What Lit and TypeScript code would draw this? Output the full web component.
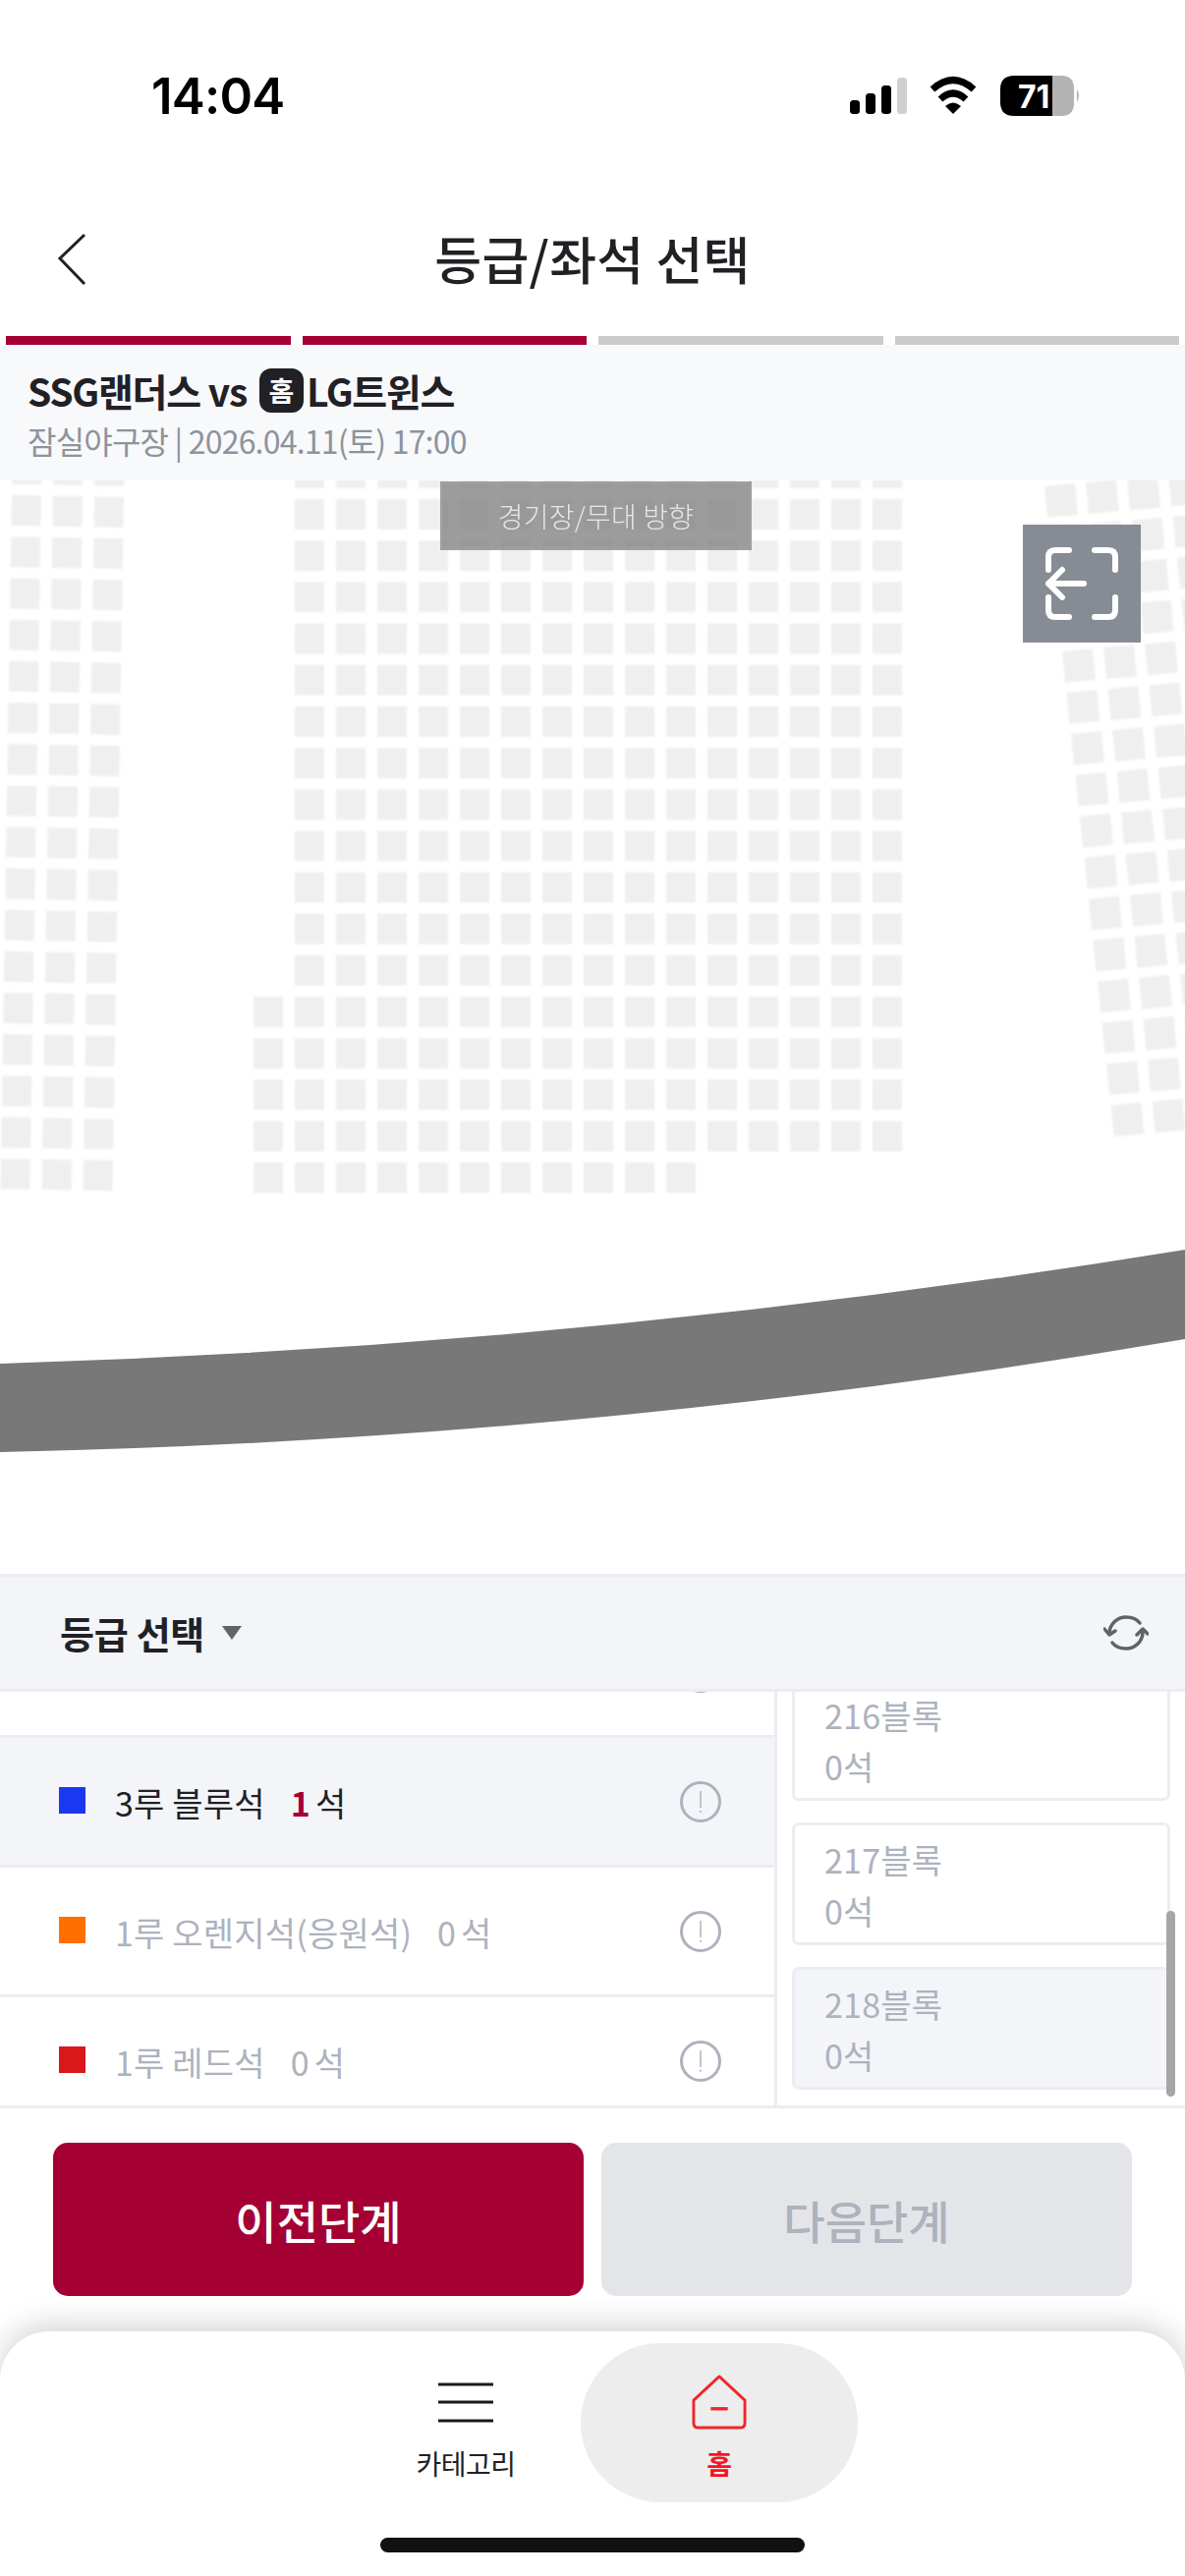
import { LitElement, html, css, svg } from "lit";
import { customElement } from "lit/decorators.js";

const seats = () => {
  const out: unknown[] = [];
  const rect = (x: number, y: number, w: number, h: number, a: number) =>
    svg`<rect x=${x} y=${y} width=${w} height=${h} transform=${`rotate(${a} ${x} ${y})`}></rect>`;
  // left block
  for (let k = -1; k <= 16; k++)
    for (let c = 0; c < 3; c++)
      out.push(rect(12 - 0.69 * k + 42 * c, 504 + 42.2 * k + 0.7 * c, 30, 31, 0.94));
  // centre block
  for (let k = -1; k <= 16; k++) {
    const first = k >= 12 ? -1 : 0;
    const last = k === 16 ? 9 : 14;
    for (let c = first; c <= last; c++) out.push(svg`<rect x=${300 + 42 * c} y=${508 + 42.2 * k} width="30" height="31"></rect>`);
  }
  // right block
  for (let r = 0; r <= 15; r++)
    for (let c = 0; c < 5; c++)
      out.push(rect(1063 + 4.5 * r + 42 * c, 495 + 42 * r - 3.7 * c, 31, 32, -5.5));
  return out;
};

@customElement("app-root")
export class AppRoot extends LitElement {
  static styles = css`
    :host { display: block; width: 1206px; height: 2622px; background: #fff; overflow: hidden;
      font-family: "Noto Sans CJK KR", "Noto Sans", sans-serif; color: #212125; }
    * { box-sizing: border-box; }
    .page { display: flex; flex-direction: column; height: 2622px; }

    .status { height: 135px; flex: none; display: flex; justify-content: space-between; position: relative; }
    .time { margin: 69px 0 0 154px; font: 600 51px/58px Inter, sans-serif; letter-spacing: -0.8px; color: #000; }
    .status-icons { position: absolute; left: 0; top: 0; }

    .nav { height: 207px; flex: none; position: relative; display: flex; justify-content: center; }
    .nav h1 { margin: 90px 0 0; font-size: 52px; line-height: 76px; font-weight: 500; height: 76px; letter-spacing: 0.3px; }
    .back { position: absolute; left: 56px; top: 102px; }

    .progress { flex: none; height: 9px; padding: 0 6px; display: grid; grid-template-columns: repeat(4, 1fr); gap: 12px; }
    .progress i { background: #cccccc; }
    .progress i.on { background: #a50034; }

    .info { flex: none; height: 138px; background: #f8f9fb; padding: 21px 0 0 28px; }
    .match { display: flex; align-items: center; font-size: 39px; line-height: 50px; font-weight: 700; letter-spacing: -1.3px; height: 50px; }
    .vs { margin-right: 13px; margin-left: 8px; }
    .badge { width: 45px; height: 45px; border-radius: 12px; background: #212125; color: #fff; font-size: 28px; font-weight: 700;
      display: flex; align-items: center; justify-content: center; margin-right: 3px; letter-spacing: 0; }
    .sub { font-size: 32px; line-height: 44px; color: #8d939c; margin-top: 4px; letter-spacing: -0.8px; }

    .map { flex: none; height: 1113px; position: relative; overflow: hidden; background: #fff; }
    .map svg { display: block; }
    .seats { fill: #efefef; filter: blur(1px); }
    .stage { position: absolute; left: 448px; top: 1px; width: 317px; height: 70px; background: rgba(125, 125, 125, 0.76);
      border: 3px solid rgba(160, 160, 160, 0.9); color: #e6e6e6; font-size: 28px; font-weight: 300; letter-spacing: 0.2px;
      display: flex; align-items: center; justify-content: center; }
    .full { position: absolute; left: 1041px; top: 45px; width: 120px; height: 120px; background: #868c94; display: block; }

    .grade-head { flex: none; height: 120px; background: #f4f5f9; border-top: 3px solid #ecedf2; border-bottom: 3px solid #ecedf2;
      display: flex; align-items: center; padding: 0 37px 0 61px; }
    .grade-head b { font-size: 38px; font-weight: 700; letter-spacing: -0.3px; line-height: 50px; }
    .tri { margin-left: 18px; width: 20px; height: 14px; background: #5f6469; clip-path: polygon(0 0, 100% 0, 50% 100%); }
    .refresh { margin-left: auto; display: block; }

    .body { flex: none; height: 424px; display: flex; border-bottom: 3px solid #ecedf2; position: relative; overflow: hidden; }
    .list { width: 791px; flex: none; border-right: 3px solid #ecedf2; overflow: hidden; }
    .rows { margin-top: -85px; }
    .row { height: 132px; border-bottom: 3px solid #ecedf2; display: flex; align-items: center; padding: 0 54px 0 60px; font-size: 34px; color: #adb2bd; letter-spacing: 0.2px; }
    .row.sel { background: #f4f5f9; color: #212125; }
    .row > span:not(.swatch) { position: relative; top: 1px; }
    .swatch { width: 27px; height: 27px; flex: none; margin-right: 30px; margin-top: -2px; }
    .count { margin-left: 26px; word-spacing: -3px; }
    .count b { color: #a50034; font-weight: 700; }
    .info-i { margin-left: auto; display: block; }

    .blocks { flex: 1; overflow: hidden; padding: 0 15px; }
    .blockrow { margin-top: -14px; display: flex; flex-direction: column; gap: 22px; }
    .card { height: 125px; border: 3px solid #ecedf2; border-radius: 7px; padding: 9px 0 0 30px; color: #adb2bd; font-size: 34px; line-height: 52px; letter-spacing: 0.2px; }
    .card.alt { background: #f4f5f9; }
    .card div { height: 52px; }
    .bar { position: absolute; left: 1187px; top: 223px; width: 9px; height: 189px; border-radius: 5px; background: #a6a6a6; }

    .buttons { flex: none; height: 227px; padding: 35px 54px 0; display: grid; grid-template-columns: 540px 540px; gap: 18px; align-content: start; }
    .btn { height: 156px; border-radius: 15px; display: flex; align-items: center; justify-content: center; font-size: 46px; font-weight: 500; }
    .btn.prev { background: #a50034; color: #fff; }
    .btn.next { background: #e4e5e8; color: #adb2bd; }

    .tabs { flex: 1; background: #fff; border-radius: 50px 50px 0 0; box-shadow: 0 -6px 32px rgba(0, 0, 0, 0.18); position: relative;
      display: flex; align-items: flex-start; padding: 12px 0 0 369px; z-index: 1; }
    .tab { height: 162px; border-radius: 81px; display: flex; flex-direction: column; align-items: center; padding-top: 32px; font-size: 28px; flex: none; }
    .tab svg { display: block; height: 56px; }
    .tab span { margin-top: 14px; line-height: 40px; letter-spacing: -0.5px; }
    .tab.cat { width: 210px; margin-right: 12px; }
    .tab.home { width: 282px; background: #ededee; color: #f6141e; font-weight: 700; }
    .indicator { position: absolute; left: 387px; top: 210px; width: 432px; height: 15px; border-radius: 8px; background: #111; }
  `;

  render() {
    return html`<div class="page">
      <div class="status">
        <div class="time">14:04</div>
        <svg class="status-icons" width="1206" height="135" viewBox="0 0 1206 135">
          <rect x="865" y="102" width="10" height="14" rx="3.5"></rect>
          <rect x="881" y="95" width="10" height="21" rx="3.5"></rect>
          <rect x="897" y="87" width="10" height="29" rx="3.5"></rect>
          <rect x="913" y="79" width="10" height="37" rx="3.5" fill="#cfcfcf"></rect>
          <path d="M949 91Q970 72 991 91" fill="none" stroke="#000" stroke-width="7"></path>
          <path d="M957 101Q970 89 983 101" fill="none" stroke="#000" stroke-width="7"></path>
          <path d="M962 108Q970 101 978 108L970 116Z"></path>
          <path d="M1071 77H1080Q1093 77 1093 90V105Q1093 118 1080 118H1071Z" fill="#b3b3b3"></path>
          <path d="M1071 77H1032Q1018 77 1018 91V104Q1018 118 1032 118H1071Z"></path>
          <path d="M1096 91Q1100 97 1096 104Z" fill="#b3b3b3"></path>
          <text x="1036" y="110" fill="#fff" font-family="Inter" font-weight="700" font-size="32">71</text>
        </svg>
      </div>

      <div class="nav">
        <svg class="back" width="32" height="54" viewBox="0 0 32 54"><path d="M30 2L5 26L30 52" fill="none" stroke="#212125" stroke-width="3"></path></svg>
        <h1>등급/좌석 선택</h1>
      </div>

      <div class="progress"><i class="on"></i><i class="on"></i><i></i><i></i></div>

      <div class="info">
        <div class="match">SSG랜더스<span class="vs">vs</span><span class="badge">홈</span>LG트윈스</div>
        <div class="sub">잠실야구장 | 2026.04.11(토) 17:00</div>
      </div>

      <div class="map">
        <svg width="1206" height="1113" viewBox="0 489 1206 1113">
          <g class="seats">${seats()}</g>
          <path d="M0 1388Q603 1370 1206 1272V1363Q603 1466 0 1478Z" fill="#787878"></path>
        </svg>
        <div class="stage">경기장/무대 방향</div>
        <svg class="full" width="120" height="120" viewBox="0 0 120 120" fill="none" stroke="#fff" stroke-width="6" stroke-linecap="round" stroke-linejoin="round">
          <path d="M47 26H33Q26 26 26 33V46"></path>
          <path d="M73 26H87Q94 26 94 33V46"></path>
          <path d="M26 74V87Q26 94 33 94H47"></path>
          <path d="M94 74V87Q94 94 87 94H73"></path>
          <path d="M62 60H26M40 46L26 60L40 74"></path>
        </svg>
      </div>

      <div class="grade-head">
        <b>등급 선택</b><span class="tri"></span>
        <svg class="refresh" width="46" height="38" viewBox="0 0 46 38" fill="none" stroke="#5f6469" stroke-width="3.5" stroke-linecap="round" stroke-linejoin="round">
          <path d="M6 20C6 10 14 3 23 3C29 3 34 5 37 9"></path>
          <path d="M40 18C40 28 32 35 23 35C17 35 12 33 9 29"></path>
          <path d="M1 15L6 21L12 17"></path>
          <path d="M34 21L40 15L45 20"></path>
        </svg>
      </div>

      <div class="body">
        <div class="list"><div class="rows">
          ${[
            { n: "", c: "", k: "" },
            { n: "3루 블루석", c: "#1a38ef", k: "1", sel: true },
            { n: "1루 오렌지석(응원석)", c: "#ff6f00", k: "0" },
            { n: "1루 레드석", c: "#d9181c", k: "0" },
          ].map(
            (r) => html`<div class="row ${r.sel ? "sel" : ""}">
              ${r.n
                ? html`<span class="swatch" style="background:${r.c}"></span><span>${r.n}</span>
                    <span class="count">${r.sel ? html`<b>${r.k}</b>` : r.k} 석</span>`
                : ""}
              <svg class="info-i" width="42" height="42" viewBox="0 0 42 42" fill="none" stroke="#adb2bd">
                <circle cx="21" cy="21" r="19.5" stroke-width="3"></circle>
                <path d="M21 10V27" stroke-width="1.5"></path>
                <path d="M21 30V31.5" stroke-width="2"></path>
              </svg>
            </div>`
          )}
        </div></div>
        <div class="blocks"><div class="blockrow">
          ${["216", "217", "218"].map(
            (b, i) => html`<div class="card ${i === 2 ? "alt" : ""}"><div>${b}블록</div><div>0석</div></div>`
          )}
        </div></div>
        <div class="bar"></div>
      </div>

      <div class="buttons">
        <div class="btn prev">이전단계</div>
        <div class="btn next">다음단계</div>
      </div>

      <div class="tabs">
        <div class="tab cat">
          <svg width="56" height="56" viewBox="0 0 56 56" stroke="#1a1a1a" stroke-width="3"><path d="M0 10H56M0 28H56M0 47H56"></path></svg>
          <span>카테고리</span>
        </div>
        <div class="tab home">
          <svg width="58" height="58" viewBox="0 0 58 58" fill="none" stroke="#f0272b" stroke-width="3" stroke-linejoin="round">
            <path d="M2 27L29 2L56 27V51Q56 56 51 56H7Q2 56 2 51Z"></path>
            <path d="M20 36H38" stroke-width="3.5"></path>
          </svg>
          <span>홈</span>
        </div>
        <div class="indicator"></div>
      </div>
    </div>`;
  }
}
